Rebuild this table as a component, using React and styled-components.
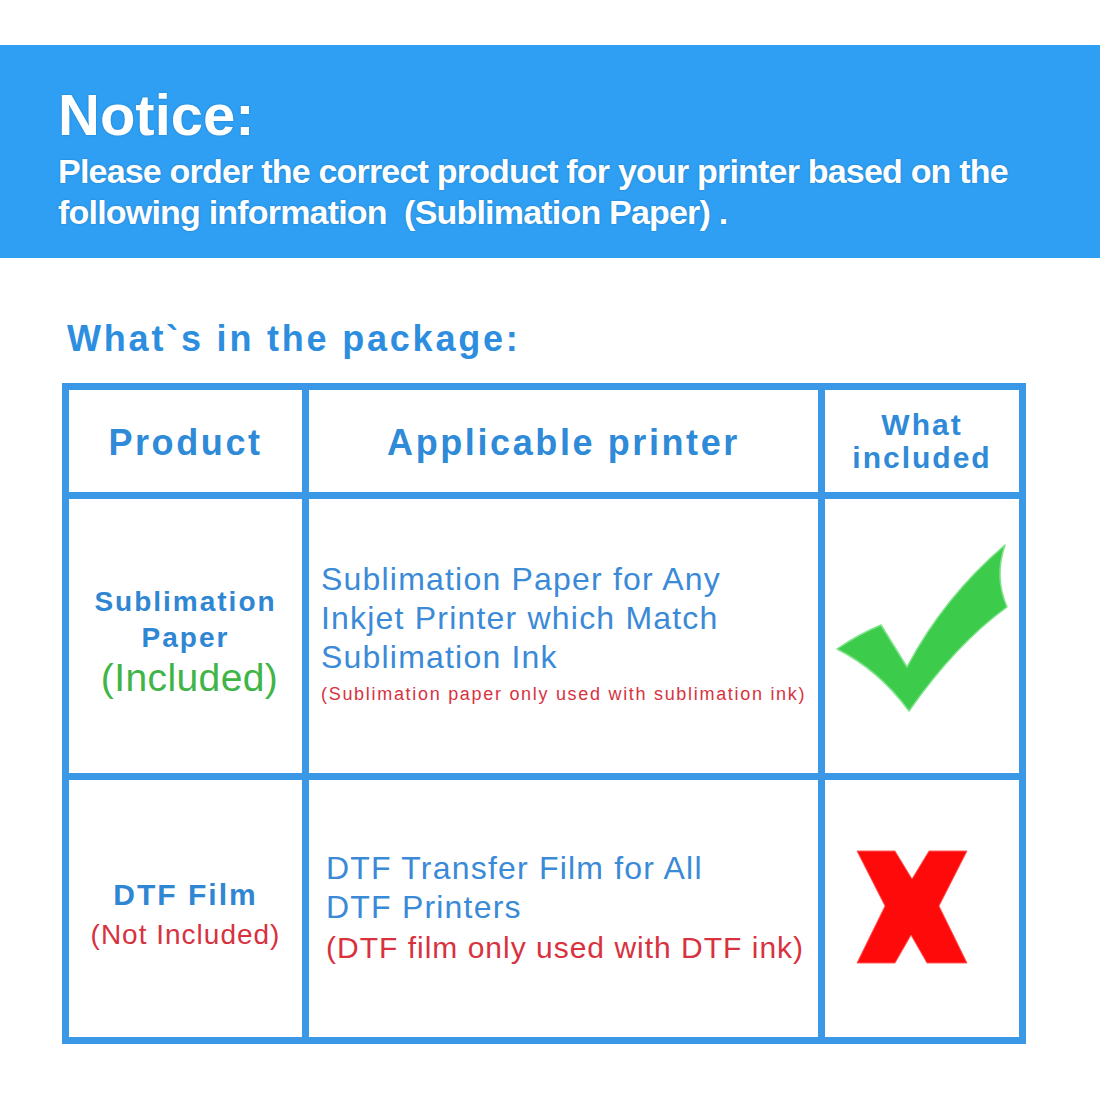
import React from 'react';
import styled, { createGlobalStyle } from 'styled-components';

const GlobalStyle = createGlobalStyle`
  body {
    margin: 0;
    background: #ffffff;
    font-family: "Liberation Sans", Arial, sans-serif;
  }
`;

function CheckMark() {
  return (
    <svg width="176" height="172" viewBox="0 0 176 172">
      <path
        d="M3,107 Q25,92 47,83 L73,125 Q110,55 171,3 Q160,35 173,65 Q122,102 75,169 Q45,128 3,107 Z"
        fill="#3dcb4b"
        stroke="#7fe38a"
        strokeWidth="1.5"
        strokeLinejoin="round"
      />
    </svg>
  );
}

function CrossMark() {
  return (
    <svg width="112" height="114" viewBox="0 0 112 114">
      <polygon
        points="1,1 39,1 56,29 73,1 111,1 83,56 111,113 71,113 55,85 39,113 1,113 29,56"
        fill="#ff0a0a"
        stroke="#ff5a5a"
        strokeWidth="1"
        strokeLinejoin="round"
      />
    </svg>
  );
}

function App() {
  return (
    <Page>
      <GlobalStyle />
      <Banner>
        <NoticeTitle>Notice:</NoticeTitle>
        <NoticeText>
          Please order the correct product for your printer based on the
          <br />
          following information&nbsp; (Sublimation Paper) .
        </NoticeText>
      </Banner>

      <SectionTitle>What`s in the package:</SectionTitle>

      <Table>
        <HeadCell>
          <HeadText>Product</HeadText>
        </HeadCell>
        <HeadCell>
          <HeadText>Applicable printer</HeadText>
        </HeadCell>
        <HeadCell>
          <HeadText small>
            What
            <br />
            included
          </HeadText>
        </HeadCell>

        <ProductCell lift="11px">
          <ProductName>
            Sublimation
            <br />
            Paper
          </ProductName>
          <Status big color="#3fb548">(Included)</Status>
        </ProductCell>
        <PrinterCell pad="12px">
          <PrinterLine>Sublimation Paper for Any</PrinterLine>
          <PrinterLine>Inkjet Printer which Match</PrinterLine>
          <PrinterLine>Sublimation Ink</PrinterLine>
          <Warning small>(Sublimation paper only used with sublimation ink)</Warning>
        </PrinterCell>
        <MarkCell shift="16px">
          <CheckMark />
        </MarkCell>

        <ProductCell lift="14px">
          <ProductName wide>DTF Film</ProductName>
          <Status color="#d7323f">(Not Included)</Status>
        </ProductCell>
        <PrinterCell pad="17px">
          <PrinterLine>DTF Transfer Film for All</PrinterLine>
          <PrinterLine>DTF Printers</PrinterLine>
          <Warning>(DTF film only used with DTF ink)</Warning>
        </PrinterCell>
        <MarkCell shift="4px" nudge="20px">
          <CrossMark />
        </MarkCell>
      </Table>
    </Page>
  );
}

export default App;

const Page = styled.div`
  width: 1100px;
  height: 1100px;
  padding-top: 45px;
  box-sizing: border-box;
  overflow: hidden;
`;

const Banner = styled.div`
  height: 213px;
  box-sizing: border-box;
  background: #2e9ff2;
  padding: 41px 0 0 58px;
  color: #ffffff;
  text-shadow: 0 0 2px rgba(10, 70, 140, 0.45);
`;

const NoticeTitle = styled.div`
  font-size: 58px;
  line-height: 58px;
  font-weight: 700;
`;

const NoticeText = styled.div`
  margin-top: 7px;
  font-size: 34px;
  line-height: 41px;
  font-weight: 700;
  letter-spacing: -0.8px;
  white-space: nowrap;
`;

const SectionTitle = styled.h2`
  margin: 59px 0 0 67px;
  font-size: 36px;
  line-height: 43px;
  font-weight: 700;
  letter-spacing: 2.8px;
  color: #2d8ee0;
`;

const Table = styled.div`
  display: grid;
  grid-template-columns: 233px 509px 194px;
  grid-template-rows: 102px 274px 257px;
  gap: 7px;
  padding: 7px;
  margin: 23px 0 0 62px;
  width: fit-content;
  background: #3b98e6;
`;

const Cell = styled.div`
  background: #ffffff;
  display: flex;
`;

const HeadCell = styled(Cell)`
  align-items: center;
  justify-content: center;
  text-align: center;
`;

const HeadText = styled.div`
  font-weight: 700;
  color: #2f8ad8;
  font-size: ${(p) => (p.small ? '30px' : '36px')};
  line-height: ${(p) => (p.small ? '33px' : '40px')};
  letter-spacing: ${(p) => (p.small ? '2px' : '2.6px')};
  margin-top: ${(p) => (p.small ? '0' : '4px')};
`;

const ProductCell = styled(Cell)`
  flex-direction: column;
  align-items: center;
  justify-content: center;
  text-align: center;
  padding-top: ${(p) => p.lift};
`;

const ProductName = styled.div`
  font-weight: 700;
  color: #2f86d3;
  font-size: ${(p) => (p.wide ? '30px' : '28px')};
  line-height: 36px;
  letter-spacing: 2px;
`;

const Status = styled.div`
  color: ${(p) => p.color};
  font-size: ${(p) => (p.big ? '39px' : '28px')};
  line-height: ${(p) => (p.big ? '44px' : '40px')};
  letter-spacing: ${(p) => (p.big ? '0.4px' : '1px')};
  margin-top: ${(p) => (p.big ? '0' : '2px')};
  margin-left: ${(p) => (p.big ? '8px' : '0')};
`;

const PrinterCell = styled(Cell)`
  flex-direction: column;
  justify-content: center;
  padding-left: ${(p) => p.pad};
`;

const PrinterLine = styled.div`
  color: #3a8ad8;
  font-size: 32px;
  line-height: 39px;
  letter-spacing: 1.2px;
  white-space: nowrap;
`;

const Warning = styled.div`
  color: #d8323f;
  white-space: nowrap;
  font-size: ${(p) => (p.small ? '18px' : '30px')};
  line-height: ${(p) => (p.small ? '35px' : '42px')};
  letter-spacing: ${(p) => (p.small ? '1.7px' : '1px')};
`;

const MarkCell = styled(Cell)`
  align-items: center;
  justify-content: center;
  padding-bottom: ${(p) => p.shift};
  padding-right: ${(p) => p.nudge || '0'};
`;
